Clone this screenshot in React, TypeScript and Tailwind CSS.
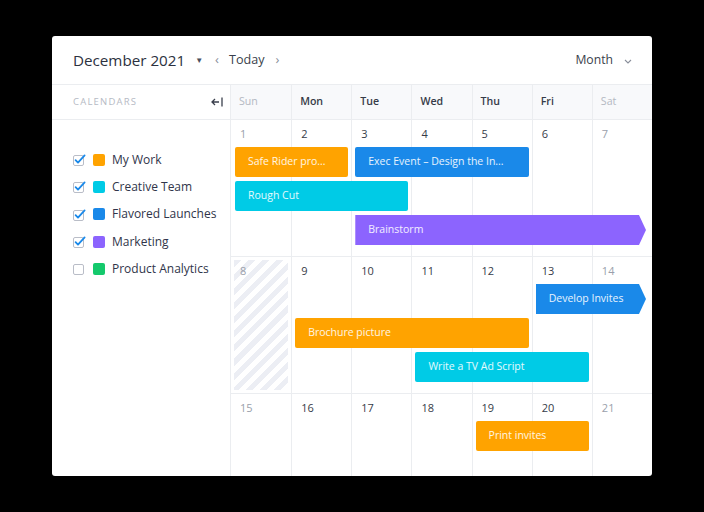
import React from "react";

type Ev = { title: string; color: string; start: number; span: number; row: number; arrow?: boolean };

const calendars = [
  { name: "My Work", color: "bg-[#ffa300]", checked: true },
  { name: "Creative Team", color: "bg-[#00cbe6]", checked: true },
  { name: "Flavored Launches", color: "bg-[#1a89e9]", checked: true },
  { name: "Marketing", color: "bg-[#8c64fe]", checked: true },
  { name: "Product Analytics", color: "bg-[#14c96c]", checked: false },
];

const days = ["Sun", "Mon", "Tue", "Wed", "Thu", "Fri", "Sat"];

const weeks: { dates: number[]; hatched?: number; events: Ev[] }[] = [
  {
    dates: [1, 2, 3, 4, 5, 6, 7],
    events: [
      { title: "Safe Rider pro...", color: "bg-[#ffa300]", start: 1, span: 2, row: 2 },
      { title: "Exec Event – Design the In...", color: "bg-[#1a89e9]", start: 3, span: 3, row: 2 },
      { title: "Rough Cut", color: "bg-[#00cbe6]", start: 1, span: 3, row: 3 },
      { title: "Brainstorm", color: "bg-[#8c64fe]", start: 3, span: 5, row: 4, arrow: true },
    ],
  },
  {
    dates: [8, 9, 10, 11, 12, 13, 14],
    hatched: 0,
    events: [
      { title: "Develop Invites", color: "bg-[#1a89e9]", start: 6, span: 2, row: 2, arrow: true },
      { title: "Brochure picture", color: "bg-[#ffa300]", start: 2, span: 4, row: 3 },
      { title: "Write a TV Ad Script", color: "bg-[#00cbe6]", start: 4, span: 3, row: 4 },
    ],
  },
  {
    dates: [15, 16, 17, 18, 19, 20, 21],
    events: [{ title: "Print invites", color: "bg-[#ffa300]", start: 5, span: 2, row: 2 }],
  },
];

const colStart = ["col-start-1", "col-start-2", "col-start-3", "col-start-4", "col-start-5", "col-start-6", "col-start-7"];
const colSpan = ["col-span-1", "col-span-2", "col-span-3", "col-span-4", "col-span-5", "col-span-6", "col-span-7"];
const rowStart = ["row-start-1", "row-start-2", "row-start-3", "row-start-4"];

function Check({ checked }: { checked: boolean }) {
  return (
    <svg width="13" height="13" viewBox="0 0 13 13" className="shrink-0">
      <rect x="0.5" y="2.5" width="10" height="10" rx="1.5" fill="white" stroke="#b9bdc7" />
      {checked && <path d="M2.6 7.2 L5 9.6 L11.6 2.4" fill="none" stroke="#1a89e9" strokeWidth="1.8" strokeLinecap="round" strokeLinejoin="round" />}
    </svg>
  );
}

export default function App() {
  return (
    <div className="w-[704px] h-[512px] bg-black flex items-center justify-center" style={{ fontFamily: '"Open Sans", sans-serif' }}>
      <div className="w-[600px] h-[440px] bg-white rounded-[3px] overflow-hidden flex flex-col">
        {/* top bar */}
        <div className="h-[49px] shrink-0 border-b border-[#ebedf0] flex items-center pl-[21px] pr-[20px]">
          <span className="text-[15.2px] text-[#2c3140]">December 2021</span>
          <span className="ml-[10px] text-[8px] text-[#4a4f5c]">▼</span>
          <span className="ml-[12px] text-[13px] text-[#8a8f9b]">‹</span>
          <span className="ml-[10px] text-[12.6px] text-[#3a3f4c]">Today</span>
          <span className="ml-[11px] text-[13px] text-[#8a8f9b]">›</span>
          <span className="ml-auto text-[12.2px] text-[#3a3f4c]">Month</span>
          <svg width="8" height="5" viewBox="0 0 8 5" className="ml-[11px] mt-[2px]">
            <path d="M1 1 L4 4 L7 1" fill="none" stroke="#8a8f9b" strokeWidth="1.1" />
          </svg>
        </div>

        <div className="flex flex-1 min-h-0">
          {/* sidebar */}
          <div className="w-[179px] shrink-0 border-r border-[#ebedf0] flex flex-col">
            <div className="h-[35px] border-b border-[#ebedf0] flex items-center pl-[21px] pr-[7px]">
              <span className="text-[9.5px] tracking-[1.2px] text-[#b6bac4]">CALENDARS</span>
              <svg width="12" height="10" viewBox="0 0 12 10" className="ml-auto">
                <path d="M1 5 H8 M4 2 L1 5 L4 8" fill="none" stroke="#3a3f4c" strokeWidth="1.3" />
                <path d="M11 0.5 V9.5" stroke="#3a3f4c" strokeWidth="1.3" />
              </svg>
            </div>
            <div className="flex flex-col pt-[31px] pl-[21px] gap-[10px]">
              {calendars.map((c) => (
                <div key={c.name} className="flex items-center h-[17.3px]">
                  <Check checked={c.checked} />
                  <span className={`ml-[7px] w-[12px] h-[12px] rounded-[2px] ${c.color}`} />
                  <span className="ml-[7px] text-[12px] text-[#30354a]">{c.name}</span>
                </div>
              ))}
            </div>
          </div>

          {/* month grid */}
          <div className="flex-1 flex flex-col">
            <div className="h-[35px] shrink-0 grid grid-cols-7 border-b border-[#ebedf0] bg-[#f8f9fb]">
              {days.map((d, i) => (
                <div key={d} className={`flex items-center pl-[8px] text-[10.6px] ${i > 0 ? "border-l border-[#ebedf0]" : ""} ${i === 0 || i === 6 ? "text-[#b4b8c2]" : "text-[#363b48] font-semibold"}`}>
                  {d}
                </div>
              ))}
            </div>
            {weeks.map((w, wi) => (
              <div key={wi} className="h-[137px] shrink-0 grid grid-cols-7 grid-rows-[27px_34px_34px_34px_1fr] border-b border-[#ebedf0]">
                {w.dates.map((n, i) => (
                  <div
                    key={n}
                    className={`${colStart[i]} row-start-1 row-span-5 ${i > 0 ? "border-l border-[#ebedf0]" : ""} flex`}
                  >
                    {w.hatched === i ? (
                      <div className="flex-1 m-[3px] bg-[repeating-linear-gradient(135deg,#eceef4_0px,#eceef4_5px,#ffffff_5px,#ffffff_10px)] pl-[6px] pt-[3px] text-[11px] text-[#9a9fab]">
                        {n}
                      </div>
                    ) : (
                      <div className={`pl-[9px] pt-[6px] text-[11px] ${i === 0 || i === 6 ? "text-[#9a9fab]" : "text-[#363b48]"}`}>{n}</div>
                    )}
                  </div>
                ))}
                {w.events.map((e) => (
                  <div
                    key={e.title}
                    className={`${colStart[e.start - 1]} ${colSpan[e.span - 1]} ${rowStart[e.row - 1]} h-[30px] ml-[4px] ${e.arrow ? "mr-[6px] [clip-path:polygon(0_0,calc(100%-7px)_0,100%_50%,calc(100%-7px)_100%,0_100%)]" : "mr-[3px] rounded-[2px]"} ${e.color} flex items-center pl-[13px] text-[10.5px] text-white/90 whitespace-nowrap overflow-hidden`}
                  >
                    {e.title}
                  </div>
                ))}
              </div>
            ))}
          </div>
        </div>
      </div>
    </div>
  );
}
